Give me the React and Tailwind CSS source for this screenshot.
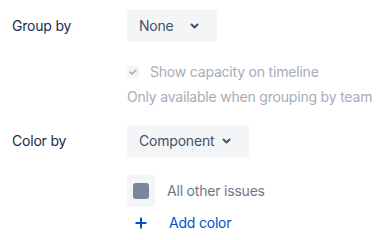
import React from 'react';

function Chevron() {
    return (
        <svg width="9" height="6" viewBox="0 0 9 6" fill="none">
            <path d="M1.5 1.5L4.5 4.5L7.5 1.5" stroke="#42526E" strokeWidth="2" strokeLinecap="round" strokeLinejoin="round" />
        </svg>
    );
}

function Select({ value, gap, width }) {
    return (
        <div className={`flex items-center h-8 rounded-[3px] bg-[#F4F5F7] pl-3 ${width}`}>
            <span className="text-[14px] text-[#42526E]">{value}</span>
            <span className={gap}><Chevron /></span>
        </div>
    );
}

export default function App() {
    return (
        <div className="w-[382px] h-[240px] bg-white pl-3 pt-[10px] font-['Inter',sans-serif] text-[14px] leading-5 tracking-[-0.2px]">
            {/* Group by */}
            <div className="flex items-center h-8">
                <div className="w-[115px] text-[#172B4D]">Group by</div>
                <Select value="None" gap="ml-[16px] flex" width="w-[90px]" />
            </div>

            <div className="ml-[115px] mt-5 flex items-center h-5">
                <div className="w-3 h-3 rounded-[2px] bg-[#F4F5F7] flex items-center justify-center">
                    <svg width="8" height="6" viewBox="0 0 8 6" fill="none">
                        <path d="M1 3L3 5L7 1" stroke="#A5ADBA" strokeWidth="1.6" strokeLinecap="round" strokeLinejoin="round" />
                    </svg>
                </div>
                <span className="ml-[11px] text-[#A5ADBA]">Show capacity on timeline</span>
            </div>
            <div className="ml-[115px] mt-[5px] h-5 text-[#A5ADBA]">Only available when grouping by team</div>

            {/* Color by */}
            <div className="flex items-center h-8 mt-[18px]">
                <div className="w-[115px] text-[#172B4D]">Color by</div>
                <Select value="Component" gap="ml-2 flex" width="w-[122px]" />
            </div>

            <div className="ml-[115px] mt-[18px] flex items-center">
                <div className="w-7 h-8 rounded-[3px] bg-[#F4F5F7] flex items-center justify-center">
                    <div className="w-4 h-4 rounded-[3px] bg-[#7A869A]" />
                </div>
                <span className="ml-3 text-[#6B778C]">All other issues</span>
            </div>

            <div className="ml-[115px] mt-[6px] flex items-center h-5">
                <div className="w-7 flex justify-center">
                    <svg width="12" height="12" viewBox="0 0 12 12" fill="none">
                        <path d="M6 0.5V11.5M0.5 6H11.5" stroke="#0052CC" strokeWidth="2" />
                    </svg>
                </div>
                <span className="ml-[14px] text-[#0052CC]">Add color</span>
            </div>
        </div>
    );
}
